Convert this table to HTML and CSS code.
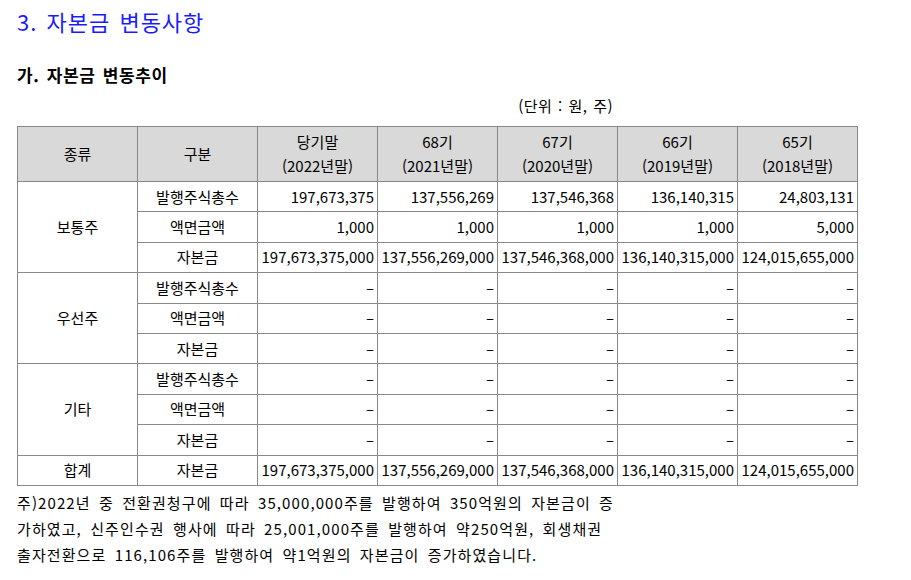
FILE: index.html
```html
<!DOCTYPE html>
<html lang="ko">
<head>
<meta charset="utf-8">
<title>자본금 변동사항</title>
<link rel="stylesheet" href="styles.css">
</head>
<body>
<h2 class="title">3. 자본금 변동사항</h2>
<h3 class="subtitle">가. 자본금 변동추이</h3>
<div class="unit-row"><span class="unit">(단위 : 원, 주)</span></div>
<table class="cap-table">
  <colgroup>
    <col class="c"><col class="c"><col class="c"><col class="c"><col class="c"><col class="c"><col class="c">
  </colgroup>
  <thead>
    <tr>
      <th>종류</th>
      <th>구분</th>
      <th>당기말<br>(2022년말)</th>
      <th>68기<br>(2021년말)</th>
      <th>67기<br>(2020년말)</th>
      <th>66기<br>(2019년말)</th>
      <th>65기<br>(2018년말)</th>
    </tr>
  </thead>
  <tbody>
    <tr>
      <td class="lbl" rowspan="3">보통주</td>
      <td class="lbl">발행주식총수</td>
      <td class="num">197,673,375</td>
      <td class="num">137,556,269</td>
      <td class="num">137,546,368</td>
      <td class="num">136,140,315</td>
      <td class="num">24,803,131</td>
    </tr>
    <tr>
      <td class="lbl">액면금액</td>
      <td class="num">1,000</td>
      <td class="num">1,000</td>
      <td class="num">1,000</td>
      <td class="num">1,000</td>
      <td class="num">5,000</td>
    </tr>
    <tr>
      <td class="lbl">자본금</td>
      <td class="num">197,673,375,000</td>
      <td class="num">137,556,269,000</td>
      <td class="num">137,546,368,000</td>
      <td class="num">136,140,315,000</td>
      <td class="num">124,015,655,000</td>
    </tr>
    <tr>
      <td class="lbl" rowspan="3">우선주</td>
      <td class="lbl">발행주식총수</td>
      <td class="num">–</td><td class="num">–</td><td class="num">–</td><td class="num">–</td><td class="num">–</td>
    </tr>
    <tr>
      <td class="lbl">액면금액</td>
      <td class="num">–</td><td class="num">–</td><td class="num">–</td><td class="num">–</td><td class="num">–</td>
    </tr>
    <tr>
      <td class="lbl">자본금</td>
      <td class="num">–</td><td class="num">–</td><td class="num">–</td><td class="num">–</td><td class="num">–</td>
    </tr>
    <tr>
      <td class="lbl" rowspan="3">기타</td>
      <td class="lbl">발행주식총수</td>
      <td class="num">–</td><td class="num">–</td><td class="num">–</td><td class="num">–</td><td class="num">–</td>
    </tr>
    <tr>
      <td class="lbl">액면금액</td>
      <td class="num">–</td><td class="num">–</td><td class="num">–</td><td class="num">–</td><td class="num">–</td>
    </tr>
    <tr>
      <td class="lbl">자본금</td>
      <td class="num">–</td><td class="num">–</td><td class="num">–</td><td class="num">–</td><td class="num">–</td>
    </tr>
    <tr>
      <td class="lbl">합계</td>
      <td class="lbl">자본금</td>
      <td class="num">197,673,375,000</td>
      <td class="num">137,556,269,000</td>
      <td class="num">137,546,368,000</td>
      <td class="num">136,140,315,000</td>
      <td class="num">124,015,655,000</td>
    </tr>
  </tbody>
</table>
<p class="note">주)2022년 중 전환권청구에 따라 35,000,000주를 발행하여 350억원의 자본금이 증<br>가하였고, 신주인수권 행사에 따라 25,001,000주를 발행하여 약250억원, 회생채권<br>출자전환으로 116,106주를 발행하여 약1억원의 자본금이 증가하였습니다.</p>
</body>
</html>
```
FILE: styles.css
```css
html, body {
  margin: 0;
  padding: 0;
  background: #ffffff;
}
body {
  padding: 0 17px;
  font-family: "Noto Sans CJK KR", "Noto Sans", sans-serif;
  color: #000;
}
.title {
  margin: 6px 0 0;
  font-size: 22px;
  font-weight: normal;
  line-height: 30px;
  color: #1a1aff;
  letter-spacing: 1px;
  word-spacing: 2px;
}
.subtitle {
  margin: 27px 0 0;
  font-size: 17px;
  font-weight: bold;
  line-height: 24px;
  letter-spacing: 0.6px;
  word-spacing: 2px;
}
.unit-row {
  width: 841px;
  display: flex;
  justify-content: flex-end;
  margin-top: 9px;
  height: 21px;
}
.unit {
  margin-right: 245px;
  font-size: 15px;
  line-height: 20px;
  letter-spacing: 0.5px;
  word-spacing: 1px;
}
.cap-table {
  margin-top: 9px;
  border-collapse: collapse;
  table-layout: fixed;
  width: 841px;
  border: 1px solid #000;
  font-size: 15px;
}
.cap-table col.c {
  width: 120px;
}
.cap-table th,
.cap-table td {
  border: 1px solid #888;
  padding: 0 3px;
  white-space: nowrap;
  overflow: hidden;
}
.cap-table th {
  background: #d9d9d9;
  font-weight: normal;
  height: 54px;
  line-height: 24px;
  text-align: center;
}
.cap-table td {
  height: 29.4px;
  line-height: 20px;
}
.cap-table td.lbl {
  text-align: center;
}
.cap-table td.num {
  text-align: right;
  padding: 0 3px 0 0;
}
.note {
  margin: 4px 0 0;
  font-size: 15px;
  line-height: 26px;
  letter-spacing: 1.1px;
  word-spacing: 3px;
}
```
